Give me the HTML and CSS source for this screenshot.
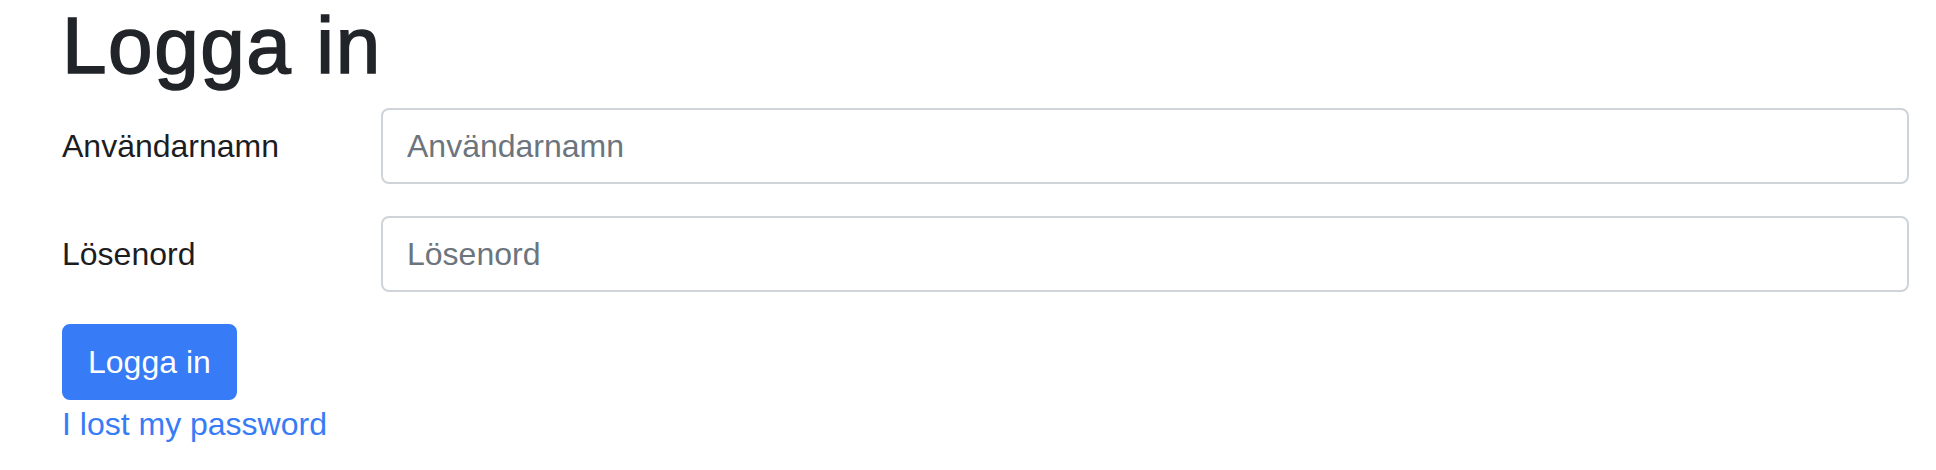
FILE: index.html
```html
<!DOCTYPE html>
<html lang="sv">
<head>
<meta charset="utf-8">
<title>Logga in</title>
<link rel="stylesheet" href="styles.css">
</head>
<body>
<main class="page">
  <h1 class="title">Logga in</h1>
  <form class="login-form">
    <div class="form-row">
      <label class="form-label" for="user">Användarnamn</label>
      <input class="form-input" id="user" type="text" placeholder="Användarnamn">
    </div>
    <div class="form-row">
      <label class="form-label" for="pass">Lösenord</label>
      <input class="form-input" id="pass" type="password" placeholder="Lösenord">
    </div>
    <button class="btn-primary" type="button">Logga in</button>
  </form>
  <a class="lost-link" href="#">I lost my password</a>
</main>
</body>
</html>
```

FILE: styles.css
```css
html, body {
  margin: 0;
  padding: 0;
  background: #ffffff;
}

body {
  font-family: "Liberation Sans", Arial, Helvetica, sans-serif;
  font-size: 32px;
  line-height: 1.5;
  color: #212529;
}

.page {
  padding: 0 27px 0 62px;
}

.title {
  margin: 0 0 16px 0;
  font-size: 80px;
  font-weight: 400;
  line-height: 92px;
  letter-spacing: 1.6px;
  -webkit-text-stroke: 1.6px #212529;
  color: #212529;
}

.login-form {
  display: flex;
  flex-direction: column;
  align-items: flex-start;
}

.form-row {
  display: flex;
  align-items: flex-start;
  width: 100%;
  margin-bottom: 32px;
}

.form-label {
  flex: 0 0 319px;
  padding-top: 14px;
  line-height: 48px;
  color: #1d1d1f;
}

.form-input {
  flex: 1 1 auto;
  box-sizing: border-box;
  height: 76px;
  padding: 0 24px;
  border: 2px solid #ced4da;
  border-radius: 8px;
  font-family: inherit;
  font-size: 32px;
  color: #495057;
  background: #ffffff;
  outline: none;
}

.form-input::placeholder {
  color: #6c757d;
  opacity: 1;
}

.btn-primary {
  box-sizing: border-box;
  height: 76px;
  padding: 0 24px;
  border: 2px solid #377bf6;
  border-radius: 8px;
  background: #377bf6;
  color: #ffffff;
  font-family: inherit;
  font-size: 32px;
  line-height: 48px;
  cursor: pointer;
}

.lost-link {
  display: inline-block;
  line-height: 48px;
  color: #377bf6;
  text-decoration: none;
}
```
